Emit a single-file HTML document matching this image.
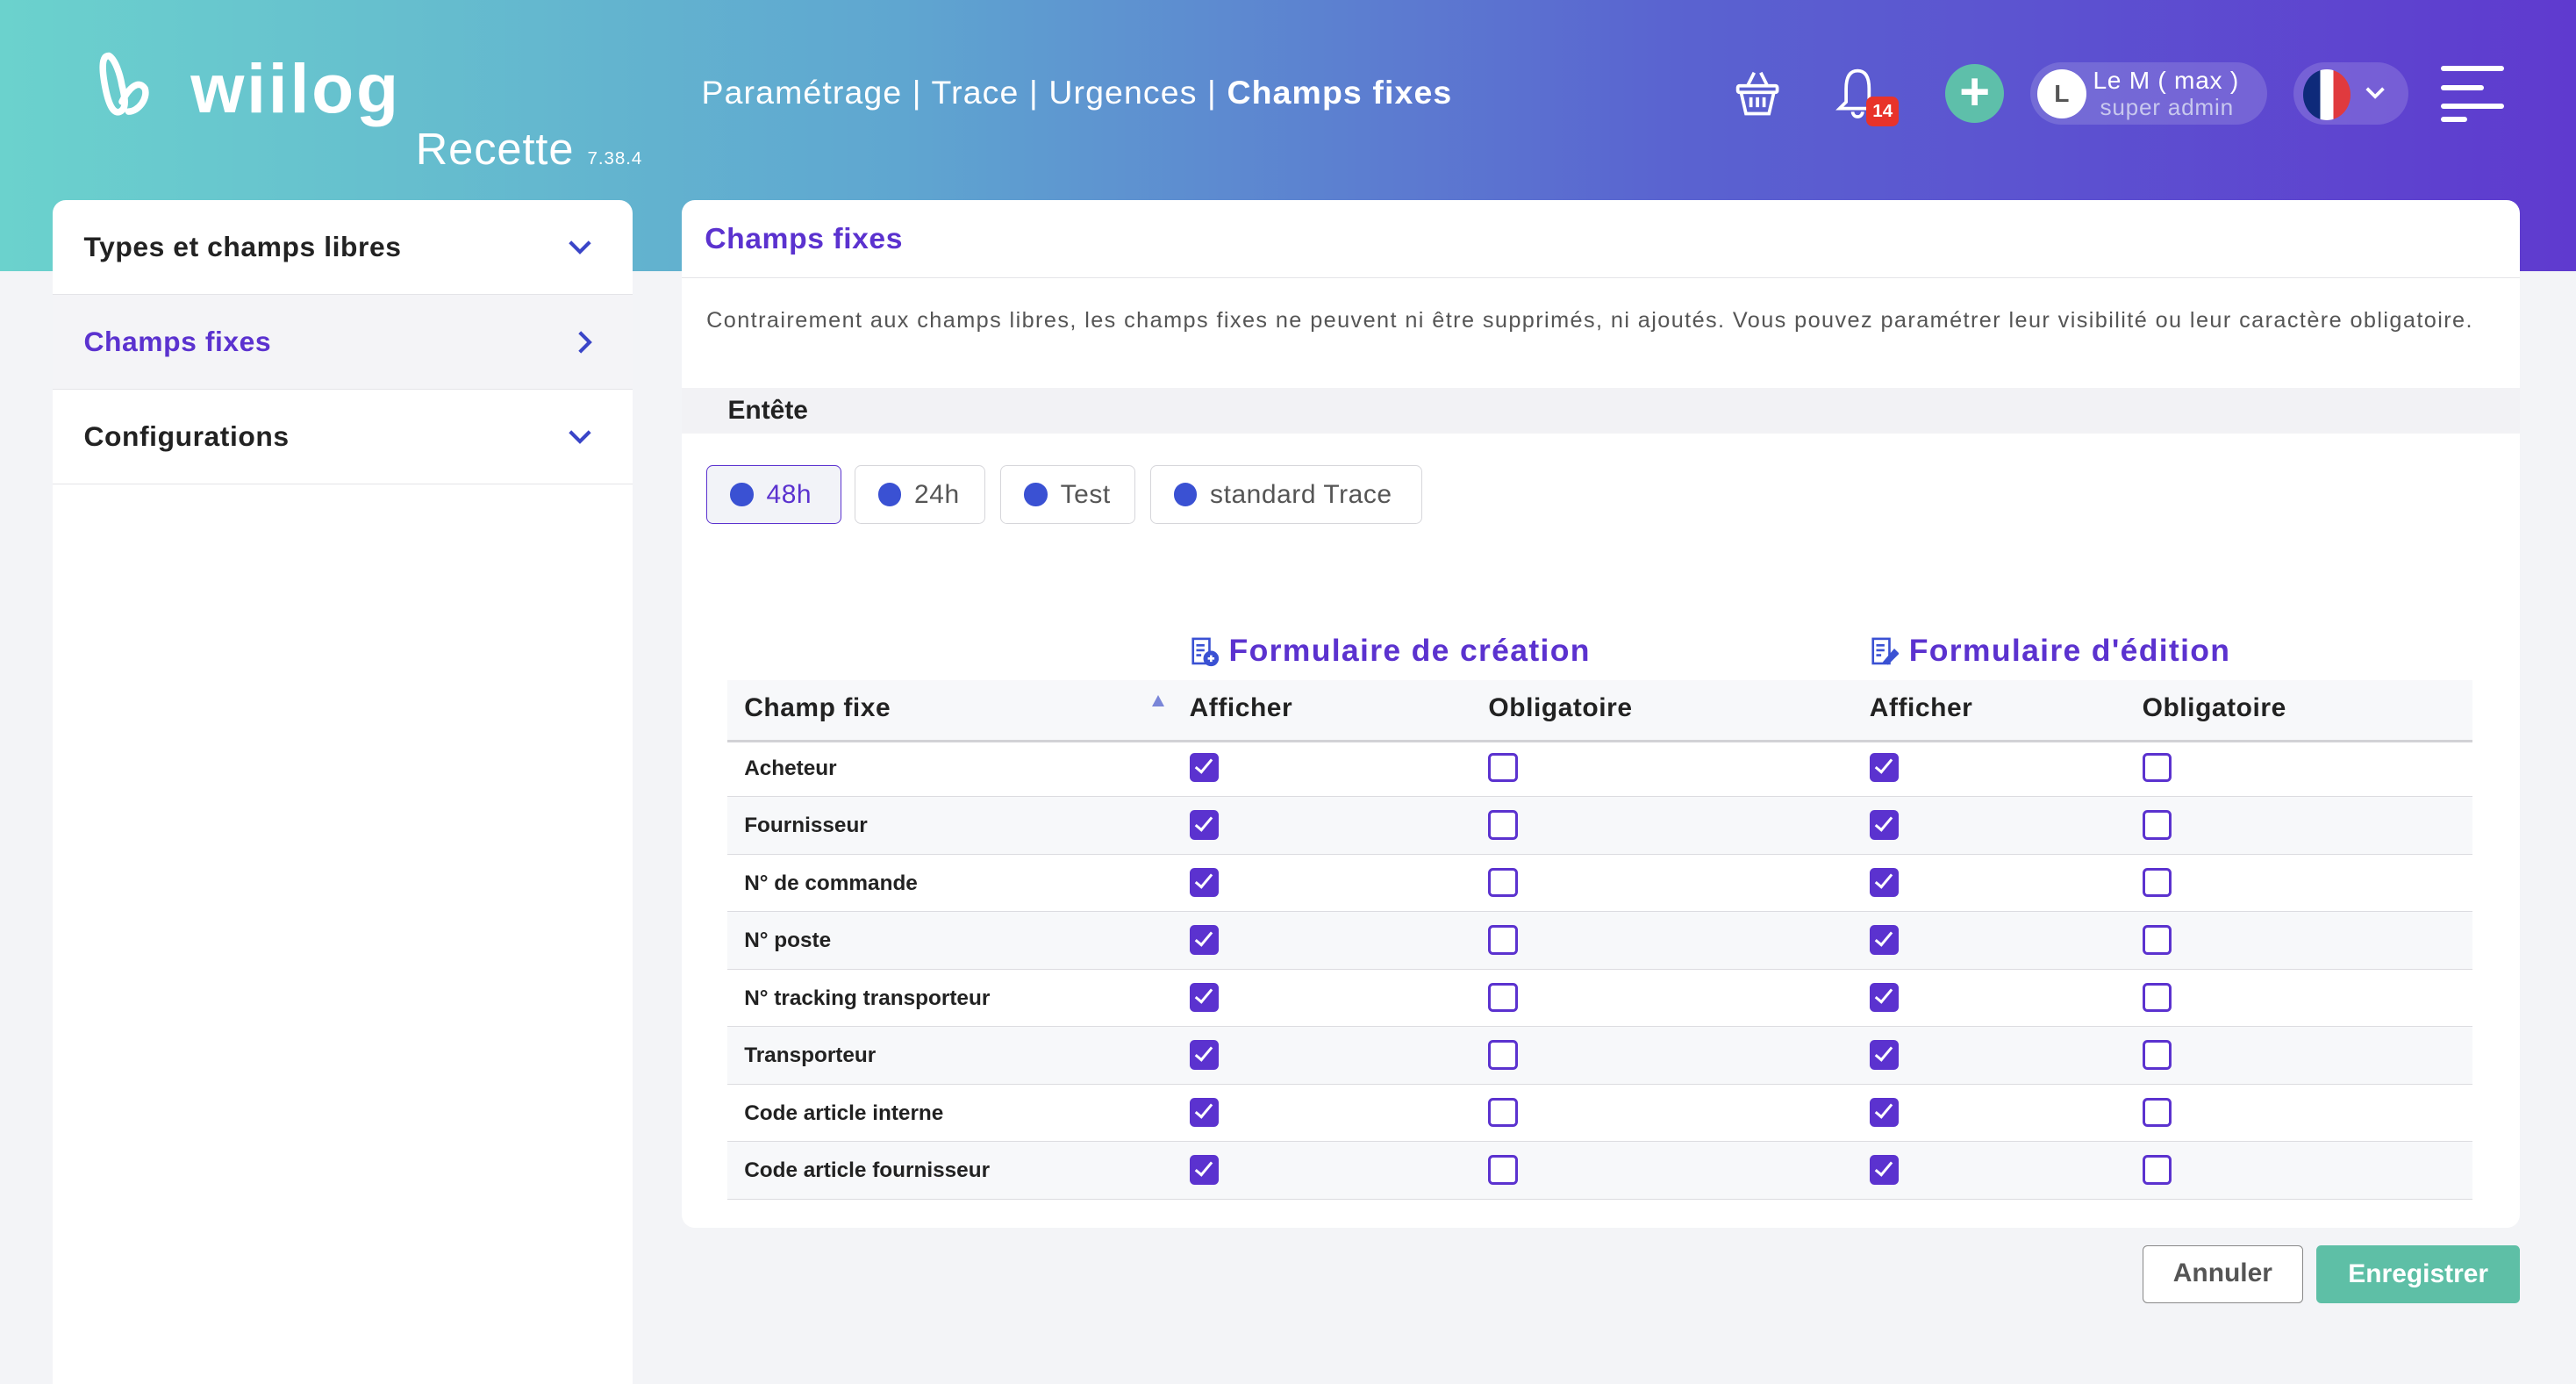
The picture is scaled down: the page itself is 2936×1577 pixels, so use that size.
<!DOCTYPE html>
<html><head><meta charset="utf-8"><style>
html,body{margin:0;padding:0}
body{width:1568px;height:818px;overflow:hidden;zoom:1.8724;background:#f3f4f7;font-family:"Liberation Sans",sans-serif;position:relative}
.hdr{position:absolute;left:0;top:0;width:1568px;height:165px;background:linear-gradient(90deg,#6bd2cd 0%,#5fa6d0 35%,#5a63d0 65%,#5f3acf 100%)}
.abs{position:absolute}
.card{position:absolute;background:#fff;border-radius:8px}
.side .it{height:57px;border-bottom:1px solid #e4e4e8;display:flex;align-items:center;justify-content:space-between;padding:0 24px 0 19px;font-size:17px;font-weight:bold;color:#222;letter-spacing:.3px}
.chip{position:absolute;top:283px;height:36px;border:1px solid #d6d6da;border-radius:4px;display:flex;align-items:center;font-size:16px;color:#555;box-sizing:border-box;padding-left:14px;letter-spacing:.3px}
.chip i{display:inline-block;width:14px;height:14px;border-radius:50%;background:#3a51d3;margin-right:8px}
.row{position:absolute;left:443px;width:1062px;height:35px;border-bottom:1px solid #dcdce0;font-size:13px;font-weight:bold;color:#222;line-height:35px;box-sizing:border-box;padding-left:10px}
.cb{position:absolute;top:8px;width:18px;height:18px;border-radius:3px;box-sizing:border-box}
.on{background:#5b32cf}
.on:after{content:"";position:absolute;left:6px;top:2px;width:4px;height:9px;border:solid #fff;border-width:0 2px 2px 0;transform:rotate(40deg)}
.off{border:2px solid #5b32cf;background:#fff}
.th{position:absolute;top:422px;font-size:16px;font-weight:bold;color:#222;letter-spacing:.3px}
</style></head><body>
<div class="hdr"></div>
<svg class="abs" style="left:58px;top:30px" width="50" height="44" viewBox="0 0 50 44"><path d="M8 4 C3 4 4 14 6 24 C8 34 11 40 15 38 C19 36 18 30 16 22 C15 16 12 6 8 4 Z M16 32 C20 24 26 18 30 24 C32 30 26 38 20 38" fill="none" stroke="#fff" stroke-width="4" stroke-linecap="round"/></svg>
<div class="abs" style="left:116px;top:30px;font-size:42px;color:#fff;letter-spacing:1.5px;font-weight:bold">wiilog</div>
<div class="abs" style="left:253px;top:75px;font-size:27px;color:#fff;letter-spacing:.5px">Recette <span style="font-size:11px">7.38.4</span></div>
<div class="abs" style="left:427px;top:45px;font-size:20px;color:#fff;letter-spacing:.6px">Paramétrage | Trace | Urgences | <b>Champs fixes</b></div>
<svg class="abs" style="left:1055px;top:42px" width="30" height="30" viewBox="0 0 30 30" fill="none" stroke="#fff" stroke-width="2"><path d="M9 10 L13 2 M21 10 L17 2"/><rect x="3" y="10" width="24" height="4" rx="1"/><path d="M5 14 L8 27 H22 L25 14 M11 17v6 M15 17v6 M19 17v6"/></svg>
<svg class="abs" style="left:1117px;top:40px" width="28" height="34" viewBox="0 0 28 34" fill="none" stroke="#fff" stroke-width="2"><path d="M14 3 C8 3 7 9 7 14 V22 L3 26 H25 L21 22 V14 C21 9 20 3 14 3 Z M11 28 a3 3 0 0 0 6 0"/></svg>
<div class="abs" style="left:1136px;top:59px;width:20px;height:18px;background:#e8332a;border-radius:4px;color:#fff;font-size:11px;font-weight:bold;text-align:center;line-height:18px">14</div>
<div class="abs" style="left:1184px;top:39px;width:36px;height:36px;border-radius:50%;background:#5ebfaa;color:#fff;font-size:32px;line-height:34px;text-align:center;font-weight:bold">+</div>
<div class="abs" style="left:1236px;top:38px;width:144px;height:38px;border-radius:19px;background:rgba(255,255,255,.15)"></div>
<div class="abs" style="left:1240px;top:42px;width:30px;height:30px;border-radius:50%;background:#fff;color:#555;font-weight:bold;font-size:15px;line-height:30px;text-align:center">L</div>
<div class="abs" style="left:1274px;top:41px;font-size:15px;color:#fff;line-height:16px;letter-spacing:.4px">Le M ( max )<br><span style="color:#c8c8ee;font-size:14px">&nbsp;super admin</span></div>
<div class="abs" style="left:1396px;top:38px;width:70px;height:38px;border-radius:19px;background:rgba(255,255,255,.15)"></div>
<div class="abs" style="left:1402px;top:42px;width:29px;height:31px;border-radius:50%;overflow:hidden;background:linear-gradient(90deg,#0e2a7a 0 36%,#fff 36% 64%,#e03a3e 64%)"></div>
<svg class="abs" style="left:1439px;top:52px" width="14" height="10" viewBox="0 0 14 10"><path d="M2 2 L7 7 L12 2" fill="none" stroke="#fff" stroke-width="2"/></svg>
<div class="abs" style="left:1486px;top:40px;width:38px;height:3px;background:#fff;border-radius:2px"></div>
<div class="abs" style="left:1486px;top:52px;width:26px;height:3px;background:#fff;border-radius:2px"></div>
<div class="abs" style="left:1486px;top:63px;width:38px;height:3px;background:#fff;border-radius:2px"></div>
<div class="abs" style="left:1486px;top:71px;width:16px;height:3px;background:#fff;border-radius:2px"></div>
<div class="card side" style="left:32px;top:122px;width:353px;height:720px;border-radius:8px 8px 0 0">
<div class="it">Types et champs libres<svg width="16" height="10" viewBox="0 0 16 10"><path d="M2 2 L8 8 L14 2" fill="none" stroke="#3a45c8" stroke-width="2.2"/></svg></div>
<div class="it" style="background:#f4f4f7;color:#5b32cf">Champs fixes<svg width="10" height="16" viewBox="0 0 10 16"><path d="M2 2 L8 8 L2 14" fill="none" stroke="#3a45c8" stroke-width="2.2"/></svg></div>
<div class="it">Configurations<svg width="16" height="10" viewBox="0 0 16 10"><path d="M2 2 L8 8 L14 2" fill="none" stroke="#3a45c8" stroke-width="2.2"/></svg></div>
</div>
<div class="card" style="left:415px;top:122px;width:1119px;height:625px">
<div style="height:47px;border-bottom:1px solid #e4e4e8;padding-left:14px;line-height:47px;font-size:18px;font-weight:bold;color:#5b32cf;letter-spacing:.3px">Champs fixes</div>
<div style="padding:18px 0 0 15px;font-size:13.5px;color:#555;letter-spacing:.75px">Contrairement aux champs libres, les champs fixes ne peuvent ni être supprimés, ni ajoutés. Vous pouvez paramétrer leur visibilité ou leur caractère obligatoire.</div>
<div style="position:absolute;left:0;top:114px;width:1119px;height:28px;background:#f2f2f5;font-size:16px;font-weight:bold;color:#222;line-height:28px;padding-left:28px;box-sizing:border-box">Entête</div>
</div>
<div class="chip" style="left:430px;width:82px;border-color:#5b32cf;background:#f2f3f8;color:#5b32cf"><i></i>48h</div>
<div class="chip" style="left:520px;width:80px"><i></i>24h</div>
<div class="chip" style="left:609px;width:82px"><i></i>Test</div>
<div class="chip" style="left:700px;width:166px"><i></i>standard Trace</div>
<svg class="abs" style="left:724px;top:388px" width="18" height="18" viewBox="0 0 18 18" fill="none" stroke="#3a51d3" stroke-width="1.4"><rect x="2" y="1" width="10" height="15"/><path d="M4 5h5M4 8h5M4 11h3"/><circle cx="13" cy="13" r="4" fill="#3a51d3"/><path d="M13 11v4M11 13h4" stroke="#fff"/></svg>
<div class="abs" style="left:748px;top:385px;font-size:19px;font-weight:bold;color:#5b32cf;letter-spacing:.7px">Formulaire de création</div>
<svg class="abs" style="left:1138px;top:388px" width="18" height="18" viewBox="0 0 18 18" fill="none" stroke="#3a51d3" stroke-width="1.4"><rect x="2" y="1" width="10" height="15"/><path d="M4 5h5M4 8h5M4 11h3"/><path d="M9 15 L15 8 L17 10 L11 16 Z" fill="#3a51d3"/></svg>
<div class="abs" style="left:1162px;top:385px;font-size:19px;font-weight:bold;color:#5b32cf;letter-spacing:.7px">Formulaire d'édition</div>
<div class="abs" style="left:443px;top:414px;width:1062px;height:36px;background:#f7f8fa;border-bottom:2px solid #d2d2d6"></div>
<div class="th" style="left:453px">Champ fixe</div>
<div class="abs" style="left:701px;top:423px;width:0;height:0;border-left:4px solid transparent;border-right:4px solid transparent;border-bottom:7px solid #7a86d8"></div>
<div class="th" style="left:724px">Afficher</div>
<div class="th" style="left:906px">Obligatoire</div>
<div class="th" style="left:1138px">Afficher</div>
<div class="th" style="left:1304px">Obligatoire</div>
<div class="row" style="top:450px">Acheteur<span class="cb on" style="left:281px"></span><span class="cb off" style="left:463px"></span><span class="cb on" style="left:695px"></span><span class="cb off" style="left:861px"></span></div>
<div class="row" style="top:485px;background:#f7f8fa">Fournisseur<span class="cb on" style="left:281px"></span><span class="cb off" style="left:463px"></span><span class="cb on" style="left:695px"></span><span class="cb off" style="left:861px"></span></div>
<div class="row" style="top:520px">N° de commande<span class="cb on" style="left:281px"></span><span class="cb off" style="left:463px"></span><span class="cb on" style="left:695px"></span><span class="cb off" style="left:861px"></span></div>
<div class="row" style="top:555px;background:#f7f8fa">N° poste<span class="cb on" style="left:281px"></span><span class="cb off" style="left:463px"></span><span class="cb on" style="left:695px"></span><span class="cb off" style="left:861px"></span></div>
<div class="row" style="top:590px">N° tracking transporteur<span class="cb on" style="left:281px"></span><span class="cb off" style="left:463px"></span><span class="cb on" style="left:695px"></span><span class="cb off" style="left:861px"></span></div>
<div class="row" style="top:625px;background:#f7f8fa">Transporteur<span class="cb on" style="left:281px"></span><span class="cb off" style="left:463px"></span><span class="cb on" style="left:695px"></span><span class="cb off" style="left:861px"></span></div>
<div class="row" style="top:660px">Code article interne<span class="cb on" style="left:281px"></span><span class="cb off" style="left:463px"></span><span class="cb on" style="left:695px"></span><span class="cb off" style="left:861px"></span></div>
<div class="row" style="top:695px;background:#f7f8fa">Code article fournisseur<span class="cb on" style="left:281px"></span><span class="cb off" style="left:463px"></span><span class="cb on" style="left:695px"></span><span class="cb off" style="left:861px"></span></div>
<div class="abs" style="left:1304px;top:758px;width:98px;height:35px;border:1px solid #888;border-radius:3px;box-sizing:border-box;background:#fff;color:#555;font-size:16px;font-weight:bold;text-align:center;line-height:33px">Annuler</div>
<div class="abs" style="left:1410px;top:758px;width:124px;height:35px;border-radius:3px;background:#5ebfa6;color:#fff;font-size:16px;font-weight:bold;text-align:center;line-height:35px">Enregistrer</div>
</body></html>
